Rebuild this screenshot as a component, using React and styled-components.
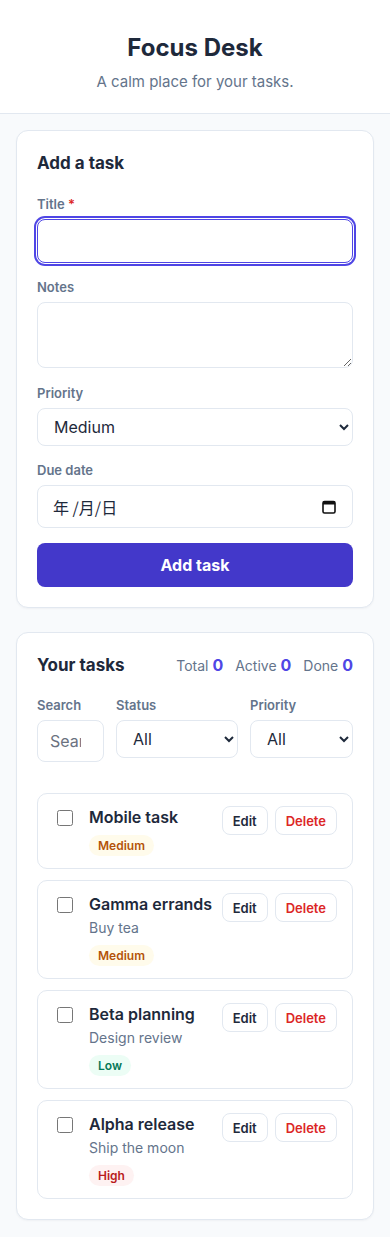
import React from 'react'
import styled, { createGlobalStyle } from 'styled-components'

const GlobalStyle = createGlobalStyle`
  * { box-sizing: border-box; }
  body {
    margin: 0;
    background: #f8fafc;
    font-family: Inter, "Noto Sans", "Noto Sans CJK SC", sans-serif;
    color: #1e293b;
  }
`

const tasks = [
  { id: 1, title: 'Mobile task', notes: '', priority: 'Medium' },
  { id: 2, title: 'Gamma errands', notes: 'Buy tea', priority: 'Medium' },
  { id: 3, title: 'Beta planning', notes: 'Design review', priority: 'Low' },
  { id: 4, title: 'Alpha release', notes: 'Ship the moon', priority: 'High' },
]

const badgeColors = {
  Low: { bg: '#ecfdf5', fg: '#047857' },
  Medium: { bg: '#fffbeb', fg: '#b45309' },
  High: { bg: '#fef2f2', fg: '#b91c1c' },
}

const CalendarIcon = () => (
  <svg width="14" height="14" viewBox="0 0 14 14" fill="none">
    <rect x="1" y="1.5" width="12" height="11.5" rx="1.5" stroke="#111" strokeWidth="1.6" />
    <rect x="1" y="1.5" width="12" height="3" fill="#111" />
  </svg>
)

const App = () => {
  return (
    <>
      <GlobalStyle />
      <Header>
        <Title>Focus Desk</Title>
        <Subtitle>A calm place for your tasks.</Subtitle>
      </Header>
      <Main>
        <Card>
          <CardTitle>Add a task</CardTitle>
          <Form onSubmit={(e) => e.preventDefault()}>
            <Field>
              <Label>
                Title <Req>*</Req>
              </Label>
              <TextInput $focused />
            </Field>
            <Field>
              <Label>Notes</Label>
              <TextArea />
            </Field>
            <Field>
              <Label>Priority</Label>
              <Select defaultValue="Medium">
                <option>Low</option>
                <option>Medium</option>
                <option>High</option>
              </Select>
            </Field>
            <Field>
              <Label>Due date</Label>
              <DateBox>
                <span>年 /月/日</span>
                <CalendarIcon />
              </DateBox>
            </Field>
            <PrimaryButton type="submit">Add task</PrimaryButton>
          </Form>
        </Card>

        <Card>
          <ListHead>
            <CardTitle>Your tasks</CardTitle>
            <Counts>
              <Count>Total <b>0</b></Count>
              <Count>Active <b>0</b></Count>
              <Count>Done <b>0</b></Count>
            </Counts>
          </ListHead>
          <Filters>
            <Field>
              <Label>Search</Label>
              <TextInput placeholder="Search" />
            </Field>
            <Field>
              <Label>Status</Label>
              <Select defaultValue="All">
                <option>All</option>
                <option>Active</option>
                <option>Done</option>
              </Select>
            </Field>
            <Field>
              <Label>Priority</Label>
              <Select defaultValue="All">
                <option>All</option>
                <option>Low</option>
                <option>Medium</option>
                <option>High</option>
              </Select>
            </Field>
          </Filters>
          <TaskList>
            {tasks.map((t) => (
              <TaskItem key={t.id}>
                <Check type="checkbox" />
                <TaskBody>
                  <TaskTitle>{t.title}</TaskTitle>
                  {t.notes && <TaskNotes>{t.notes}</TaskNotes>}
                  <Badge $bg={badgeColors[t.priority].bg} $fg={badgeColors[t.priority].fg}>
                    {t.priority}
                  </Badge>
                </TaskBody>
                <Actions>
                  <SmallButton>Edit</SmallButton>
                  <SmallButton $danger>Delete</SmallButton>
                </Actions>
              </TaskItem>
            ))}
          </TaskList>
        </Card>
      </Main>
    </>
  )
}

export default App

const Header = styled.header`
  background: #fff;
  border-bottom: 1px solid #e2e8f0;
  padding: 33px 16px 20px;
  text-align: center;
`

const Title = styled.h1`
  margin: 0;
  font-size: 24px;
  line-height: 30px;
  font-weight: 700;
  color: #1e293b;
`

const Subtitle = styled.p`
  margin: 8px 0 0;
  font-size: 15px;
  line-height: 22px;
  color: #64748b;
`

const Main = styled.main`
  padding: 16px 16px 18px;
  display: flex;
  flex-direction: column;
  gap: 24px;
`

const Card = styled.section`
  background: #fff;
  border: 1px solid #e2e8f0;
  border-radius: 12px;
  padding: 20px;
  box-shadow: 0 1px 2px rgba(15, 23, 42, 0.04);
`

const CardTitle = styled.h2`
  margin: 0;
  font-size: 17px;
  line-height: 24px;
  font-weight: 700;
  color: #1e293b;
`

const Form = styled.form`
  margin-top: 20px;
  display: flex;
  flex-direction: column;
  gap: 15px;
`

const Field = styled.label`
  display: flex;
  flex-direction: column;
  gap: 6px;
  min-width: 0;
`

const Label = styled.span`
  font-size: 13px;
  line-height: 18px;
  font-weight: 600;
  color: #64748b;
`

const Req = styled.span`
  color: #dc2626;
`

const TextInput = styled.input`
  width: 100%;
  height: ${(p) => (p.$focused ? '44px' : '42px')};
  padding: ${(p) => (p.$focused ? '0 12px' : '0 22px 0 12px')};
  border: 1px solid ${(p) => (p.$focused ? '#4f46e5' : '#e2e8f0')};
  border-radius: 8px;
  font: inherit;
  font-size: 16px;
  color: #1e293b;
  background: #fff;
  box-shadow: ${(p) => (p.$focused ? '0 0 0 1px #fff, 0 0 0 3px #4f46e5' : 'none')};
  outline: none;
  &::placeholder { color: #6b7280; }
`

const TextArea = styled.textarea`
  display: block;
  width: 100%;
  height: 66px;
  padding: 10px;
  border: 1px solid #e2e8f0;
  border-radius: 8px;
  font: inherit;
  font-size: 16px;
  resize: vertical;
  margin-bottom: 1px;
`

const Select = styled.select`
  width: 100%;
  height: 38px;
  padding: 0 12px;
  border: 1px solid #e2e8f0;
  border-radius: 8px;
  font: inherit;
  font-size: 16px;
  color: #1e293b;
  background: #fff;
`

const DateBox = styled.div`
  height: 43px;
  padding: 0 16px 0 15px;
  border: 1px solid #e2e8f0;
  border-radius: 8px;
  display: flex;
  align-items: center;
  justify-content: space-between;
  font-size: 16px;
  color: #1e293b;
  font-family: "Noto Sans CJK SC", Inter, sans-serif;
`

const PrimaryButton = styled.button`
  height: 44px;
  border: none;
  border-radius: 8px;
  background: #4338ca;
  color: #fff;
  font: inherit;
  font-size: 16px;
  font-weight: 700;
`

const ListHead = styled.div`
  display: flex;
  align-items: center;
  justify-content: space-between;
`

const Counts = styled.div`
  display: flex;
  gap: 12px;
`

const Count = styled.span`
  font-size: 14px;
  color: #64748b;
  b {
    color: #4f46e5;
    font-size: 16px;
    font-weight: 700;
  }
`

const Filters = styled.div`
  margin-top: 19px;
  display: grid;
  grid-template-columns: 67px 122px 1fr;
  gap: 12px;
  align-items: start;
`

const TaskList = styled.ul`
  list-style: none;
  margin: 31px 0 0;
  padding: 0;
  display: flex;
  flex-direction: column;
  gap: 11px;
`

const TaskItem = styled.li`
  display: flex;
  align-items: flex-start;
  padding: 12px 15px 12px 16px;
  border: 1px solid #e2e8f0;
  border-radius: 10px;
`

const Check = styled.input`
  width: 16px;
  height: 16px;
  margin: 4px 16px 0 3px;
  flex-shrink: 0;
`

const TaskBody = styled.div`
  flex: 1;
  min-width: 0;
  margin-right: 8px;
  display: flex;
  flex-direction: column;
  align-items: flex-start;
`

const TaskTitle = styled.div`
  font-size: 16px;
  line-height: 22px;
  font-weight: 600;
  color: #1e293b;
`

const TaskNotes = styled.div`
  margin-top: 3px;
  font-size: 14px;
  line-height: 20px;
  color: #64748b;
`

const Badge = styled.span`
  margin-top: 7px;
  padding: 0 9px;
  height: 21px;
  line-height: 21px;
  border-radius: 999px;
  font-size: 12px;
  font-weight: 600;
  background: ${(p) => p.$bg};
  color: ${(p) => p.$fg};
`

const Actions = styled.div`
  display: flex;
  gap: 7px;
`

const SmallButton = styled.button`
  height: 29px;
  padding: 0 10px;
  border: 1px solid #e2e8f0;
  border-radius: 8px;
  background: #fff;
  font: inherit;
  font-size: 13px;
  font-weight: 600;
  color: ${(p) => (p.$danger ? '#dc2626' : '#1e293b')};
`
